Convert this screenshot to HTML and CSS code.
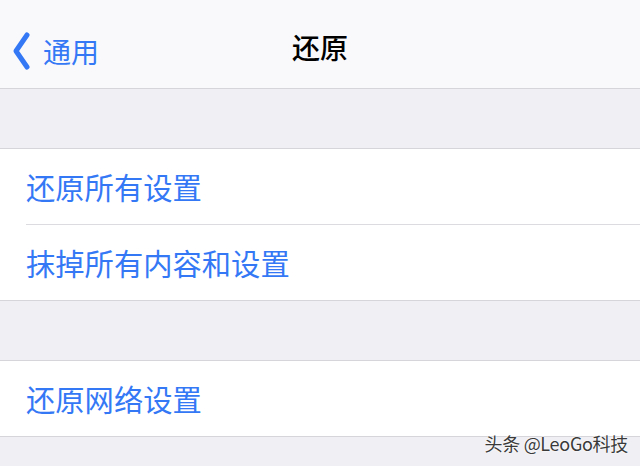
FILE: index.html
```html
<!DOCTYPE html>
<html lang="zh">
<head>
  <meta charset="UTF-8" />
  <title>还原</title>
  <link rel="stylesheet" href="styles.css">
</head>
<body>
  <div class="navbar">
    <a class="back">
      <svg class="chevron" width="20" height="40" viewBox="0 0 20 40">
        <path d="M16 4 L5 20 L16 36" fill="none" stroke="#3478f6" stroke-width="5" stroke-linecap="round" stroke-linejoin="round"/>
      </svg>
      <span>通用</span>
    </a>
    <div class="title">还原</div>
  </div>

  <div class="spacer"></div>

  <div class="group">
    <div class="row">还原所有设置</div>
    <div class="row">抹掉所有内容和设置</div>
  </div>

  <div class="spacer"></div>

  <div class="group">
    <div class="row">还原网络设置</div>
  </div>

  <div class="watermark">头条 @LeoGo科技</div>
</body>
</html>
```
FILE: styles.css
```css
body {
  margin: 0;
  padding: 0;
  overflow: hidden;
  height: 466px;
  background: #efeff4;
  font-family: "Noto Sans CJK SC", "Noto Sans", sans-serif;
  position: relative;
}

.navbar {
  height: 88px;
  background: #f9f9fb;
  border-bottom: 1px solid #d6d6da;
  position: relative;
  display: flex;
  align-items: center;
  justify-content: center;
}

.back {
  position: absolute;
  left: 11px;
  top: 31px;
  display: flex;
  align-items: center;
  color: #3478f6;
  font-size: 28px;
  line-height: 40px;
}

.back span {
  margin-left: 12px;
  margin-top: -1px;
}

.title {
  font-size: 28px;
  font-weight: 500;
  color: #000;
  margin-top: 6px;
}

.spacer {
  height: 59px;
}

.group {
  background: #fff;
  border-top: 1px solid #d6d6da;
  border-bottom: 1px solid #d6d6da;
  padding-left: 26px;
}

.row {
  height: 75px;
  line-height: 75px;
  font-size: 29.3px;
  color: #3478f6;
}

.row + .row {
  border-top: 1px solid #dcdce0;
}

.watermark {
  position: absolute;
  right: 12px;
  top: 430px;
  font-size: 18px;
  color: #3a3a3a;
  letter-spacing: -0.3px;
  text-shadow: 0 0 2px #fff, 0 0 2px #fff;
}
```
